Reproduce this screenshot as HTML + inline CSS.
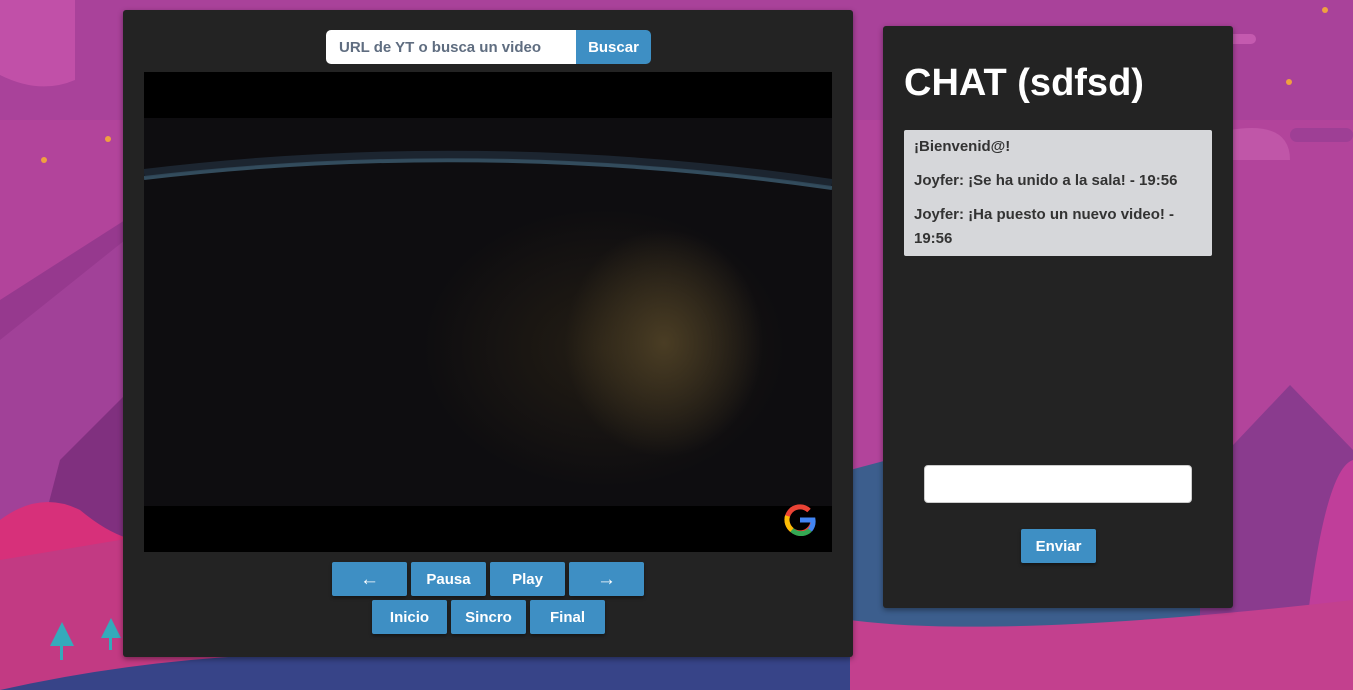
<!DOCTYPE html>
<html><head><meta charset="utf-8"><style>
*{margin:0;padding:0;box-sizing:border-box}
body{width:1353px;height:690px;overflow:hidden;position:relative;font-family:"Liberation Sans",sans-serif;font-weight:bold;background:#b4439a}
.bg{position:absolute;left:0;top:0}
.panel{position:absolute;background:#232323;border-radius:3px;box-shadow:0 2px 6px rgba(0,0,0,.4)}
.btn{position:absolute;background:#3e8fc4;color:#fff;font-size:15px;text-align:center;height:34px;line-height:36px;border-radius:2px;box-shadow:0 2px 3px rgba(0,0,0,.4)}
.msg{font-size:15px;color:#333;line-height:24px;margin-bottom:10px}
</style></head><body>
<svg class="bg" width="1353" height="690" viewBox="0 0 1353 690">
<rect width="1353" height="690" fill="#b2449b"/>
<rect width="1353" height="120" fill="#a9429a"/>
<path d="M0 0 H75 V80 Q40 95 0 75Z" fill="#c150a8"/>
<path d="M0 300 L250 140 L420 320 L420 690 H0Z" fill="#96398e"/>
<path d="M0 340 L200 180 L420 360 L420 690 H0Z" fill="#a8479e" opacity=".6"/>
<path d="M60 460 L140 380 L240 470 L240 690 H0Z" fill="#80307f"/>
<path d="M150 470 L300 300 L420 400 L420 690 H150Z" fill="#355b7e"/>
<path d="M0 520 Q40 490 80 510 Q140 560 180 530 Q230 500 260 560 L300 600 L0 690Z" fill="#d7307a"/>
<path d="M0 560 L420 490 L420 690 H0Z" fill="#c23a83"/>
<path d="M0 690 Q200 645 420 655 L900 650 Q1100 640 1353 660 V690Z" fill="#374488"/>
<path d="M850 470 L1000 430 L1200 520 L1353 480 L1353 690 H850Z" fill="#3c5e8d"/>
<path d="M1200 480 L1290 385 L1353 450 V690 H1200Z" fill="#8a3b8e"/>
<path d="M1300 690 Q1320 470 1353 460 V690Z" fill="#c03e9a"/>
<path d="M850 620 Q1000 640 1353 600 V690 H850Z" fill="#c3408e"/>
<path d="M1230 130 Q1290 120 1290 160 L1230 160Z" fill="#c056a8"/>
<rect x="1290" y="128" width="63" height="14" rx="7" fill="#9e3f95"/>
<rect x="1180" y="34" width="76" height="10" rx="5" fill="#c45aaf"/>
<g fill="#34aabb"><path d="M50 646 L62 622 L74 646Z"/><rect x="60" y="646" width="3" height="14"/><path d="M101 638 L111 618 L121 638Z"/><rect x="109" y="638" width="3" height="12"/></g>
<g fill="#f0a040"><circle cx="44" cy="160" r="3"/><circle cx="108" cy="139" r="3"/><circle cx="1289" cy="82" r="3"/><circle cx="1325" cy="10" r="3"/></g>
</svg>

<div class="panel" style="left:123px;top:10px;width:730px;height:647px"></div>
<div style="position:absolute;left:326px;top:30px;width:250px;height:34px;background:#fff;border-radius:5px 0 0 5px;color:#5f6d80;font-size:15px;line-height:36px;padding-left:13px">URL de YT o busca un video</div>
<div style="position:absolute;left:576px;top:30px;width:75px;height:34px;background:#3e8fc4;border-radius:0 5px 5px 0;color:#fff;font-size:15px;line-height:36px;text-align:center">Buscar</div>
<div style="position:absolute;left:144px;top:72px;width:688px;height:480px;background:#000;overflow:hidden">
 <div style="position:absolute;left:0;top:46px;width:688px;height:388px;overflow:hidden;background:radial-gradient(ellipse 260px 200px at 460px 230px,#231d14 0%,#0e0d10 70%),#0b0a0d">
  <svg width="688" height="388" style="position:absolute;left:0;top:0"><path d="M0 60 Q340 20 688 70" fill="none" stroke="#3d5c70" stroke-width="4" opacity=".8"/><path d="M0 55 Q340 14 688 65" fill="none" stroke="#2a3e50" stroke-width="8" opacity=".5"/></svg>
  <div style="position:absolute;left:420px;top:110px;width:200px;height:230px;background:radial-gradient(ellipse,#4a3d24 0%,rgba(0,0,0,0) 70%)"></div>
 </div>
 <svg style="position:absolute;left:640px;top:432px" width="32" height="32" viewBox="0 0 32 32"><path d="M29 16 A13 13 0 1 1 25 6.5" fill="none" stroke="#ea4335" stroke-width="5"/><path d="M3.5 12 A13 13 0 0 0 8 26" fill="none" stroke="#fbbc05" stroke-width="5"/><path d="M8 26 A13 13 0 0 0 26 26" fill="none" stroke="#34a853" stroke-width="5"/><path d="M16 16 H29 A13 13 0 0 1 26 26" fill="none" stroke="#4285f4" stroke-width="5"/></svg>
</div>
<div class="btn" style="left:332px;top:562px;width:75px;font-size:19px">←</div>
<div class="btn" style="left:411px;top:562px;width:75px">Pausa</div>
<div class="btn" style="left:490px;top:562px;width:75px">Play</div>
<div class="btn" style="left:569px;top:562px;width:75px;font-size:19px">→</div>
<div class="btn" style="left:372px;top:600px;width:75px">Inicio</div>
<div class="btn" style="left:451px;top:600px;width:75px">Sincro</div>
<div class="btn" style="left:530px;top:600px;width:75px">Final</div>

<div class="panel" style="left:883px;top:26px;width:350px;height:582px"></div>
<div style="position:absolute;left:904px;top:62px;color:#fff;font-size:38px">CHAT (sdfsd)</div>
<div style="position:absolute;left:904px;top:130px;width:308px;height:126px;background:#d6d7da;border-radius:2px;padding:5px 10px">
 <div class="msg">¡Bienvenid@!</div>
 <div class="msg">Joyfer: ¡Se ha unido a la sala! - 19:56</div>
 <div class="msg" style="width:270px">Joyfer: ¡Ha puesto un nuevo video! - 19:56</div>
</div>
<div style="position:absolute;left:924px;top:465px;width:268px;height:38px;background:#fff;border-radius:4px;border:1px solid #ccc"></div>
<div class="btn" style="left:1021px;top:529px;width:75px">Enviar</div>
</body></html>
